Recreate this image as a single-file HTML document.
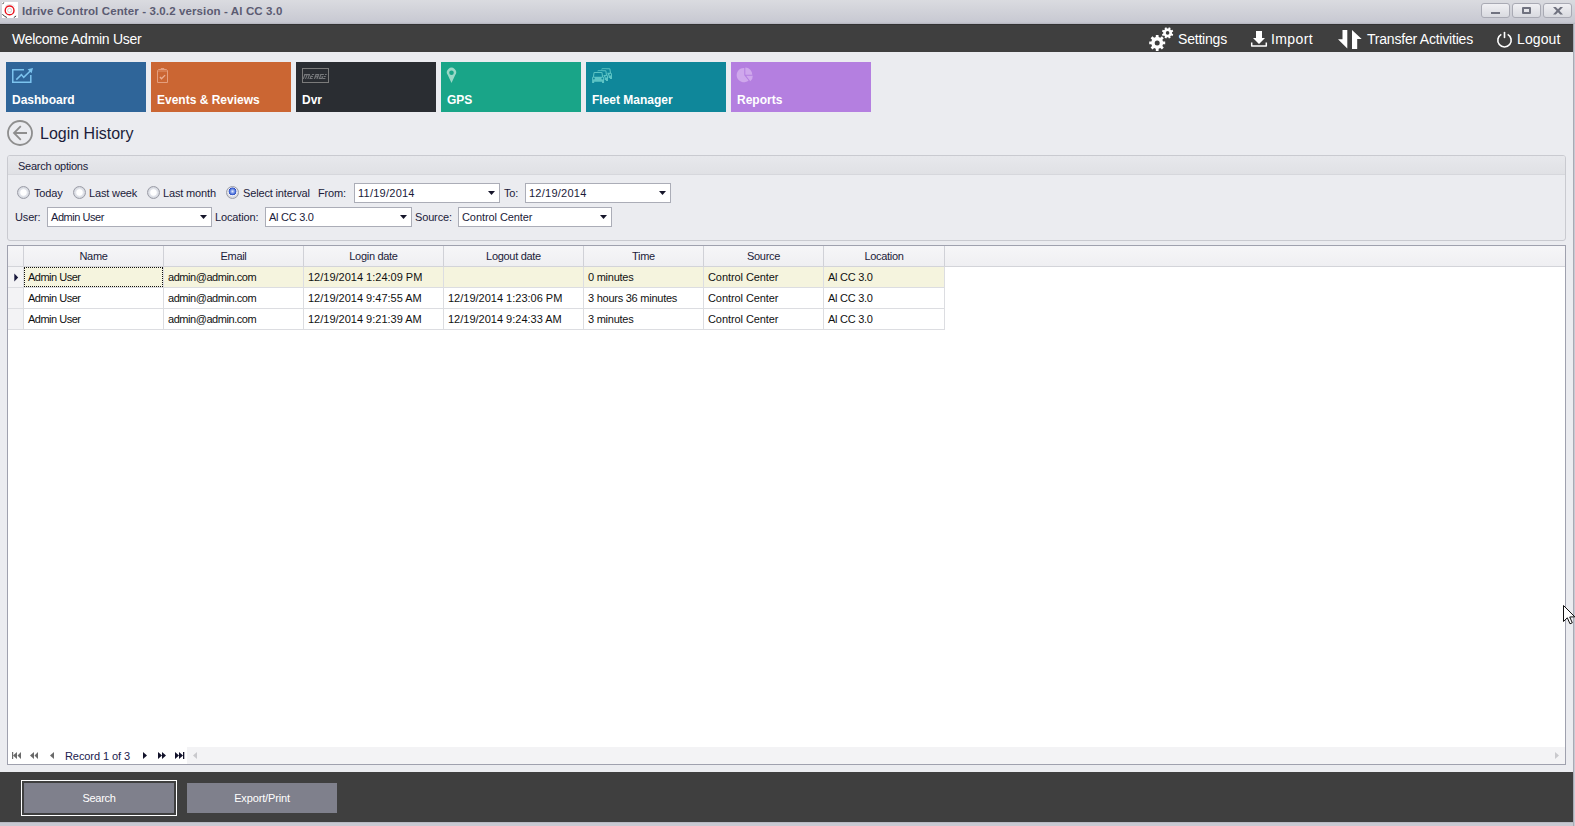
<!DOCTYPE html>
<html><head><meta charset="utf-8">
<style>
*{margin:0;padding:0;box-sizing:border-box}
html,body{width:1575px;height:826px;overflow:hidden}
body{position:relative;background:#ebecf0;font-family:"Liberation Sans",sans-serif;font-size:11px;color:#1b1b3a}
.a{position:absolute}
.t{position:absolute;white-space:nowrap;line-height:13px}
#titlebar{left:0;top:0;width:1575px;height:24px;background:linear-gradient(#dadbe0,#c8c9d2 92%,#b3b4bd)}
#title{left:22px;top:4px;font-weight:bold;font-size:11.5px;line-height:14px;color:#5b5b72;letter-spacing:0.12px}
.wbtn{position:absolute;top:3px;width:29px;height:15px;border:1px solid #a9aab4;border-radius:3px;background:linear-gradient(#f0f0f3,#d9dae0)}
#topbar{left:0;top:24px;width:1573px;height:28px;background:#3f3f3f;border-top:1px solid #333}
.tb{position:absolute;top:6px;color:#fff;font-size:14px;line-height:16px;white-space:nowrap}
.tile{position:absolute;top:62px;width:140px;height:50px}
.tile .lbl{position:absolute;left:6px;top:31px;font-weight:bold;font-size:12px;line-height:14px;color:#fff;white-space:nowrap}
.tile svg{position:absolute;left:0;top:0}
#group{left:7px;top:155px;width:1559px;height:86px;border:1px solid #c9cad0;border-radius:3px;background:#ebecf0}
#grouphead{left:0;top:0;width:100%;height:19px;background:linear-gradient(#e7e8ec,#e0e1e5);border-radius:2px 2px 0 0;border-bottom:1px solid #d6d7dc}
.radio{position:absolute;width:13px;height:13px;border-radius:50%;border:1px solid #9b9da7;background:radial-gradient(circle at 50% 50%,#fff 0,#fff 2.8px,#e6e8ee 3.6px,#d3d6dd 5.5px)}
.combo{position:absolute;height:20px;background:#fff;border:1px solid #abadb7}
.combo .v{position:absolute;left:3px;top:3px;line-height:13px;white-space:nowrap;letter-spacing:-0.1px}
.combo .arr{position:absolute;right:4px;top:7px;width:7px;height:4px;background:#15152a;clip-path:polygon(0 0,100% 0,50% 100%)}
#grid{left:7px;top:245px;width:1559px;height:520px;border:1px solid #9fa1ae;background:#fff}
#ghead{left:0;top:0;width:1557px;height:21px;background:linear-gradient(#f6f6f8,#efeff2);border-bottom:1px solid #d3d4d9}
.hc{position:absolute;top:0;height:20px;border-right:1px solid #d0d1d7;text-align:center;line-height:20px;color:#1b1b3a;letter-spacing:-0.3px}
.row{position:absolute;left:0;width:937px;height:21px;border-bottom:1px solid #dcdde1}
.c{position:absolute;top:0;height:20px;border-right:1px solid #dcdde1;padding-left:4px;line-height:20px;white-space:nowrap;color:#111;letter-spacing:-0.3px}
#footer{left:0;top:772px;width:1573px;height:50px;background:#3f3f3f}
.btn{position:absolute;top:11px;width:150px;height:30px;background:#7f808c;color:#fff;text-align:center;line-height:30px;font-size:11px}
.lab{letter-spacing:-0.15px;color:#1b1b3a}
.radio.sel{background:radial-gradient(circle at 50% 40%,#e6ecfc 0,#8aa6ec 1.6px,#3a5fd0 3.2px,#2a48b8 3.6px,#f3f4f7 4.2px,#d8dae0 5.5px)}
.selrow{background:#f5f4de}
.ind{background:#f3f3f5}
</style></head><body>
<div id="titlebar" class="a">
  <svg class="a" style="left:2px;top:2px" width="16" height="16" viewBox="0 0 16 16">
<rect x="0" y="0" width="16" height="16" fill="#fff"/>
<circle cx="7.6" cy="8.4" r="4.4" fill="none" stroke="#e8121c" stroke-width="1.4"/>
<circle cx="7.6" cy="8.4" r="2" fill="none" stroke="#c8c8c8" stroke-width="0.8"/>
<path d="M0.3,2.2 A9,9 0 0 1 2.2,0.4" stroke="#3a3a3a" stroke-width="1" fill="none"/>
<path d="M0.4,12.1 A9,9 0 0 0 4.9,15.5" stroke="#3a3a3a" stroke-width="1" fill="none"/>
<path d="M11.8,15.5 A9,9 0 0 0 14.1,13.9" stroke="#3a3a3a" stroke-width="1" fill="none"/>
<path d="M3.2,4.3 A6.5,6.5 0 0 1 12.8,4.8" stroke="#ddd" stroke-width="0.8" fill="none"/>
</svg>
  <div id="title" class="t">Idrive Control Center - 3.0.2 version - Al CC 3.0</div>
  <div class="wbtn" style="left:1481px"><div class="a" style="left:9px;top:8px;width:9px;height:2px;background:#70727f"></div></div>
  <div class="wbtn" style="left:1512px"><div class="a" style="left:9px;top:3px;width:9px;height:7px;border:2px solid #70727f;border-radius:1px"></div></div>
  <div class="wbtn" style="left:1543px"><svg class="a" style="left:9px;top:3px" width="10" height="8" viewBox="0 0 10 8"><path d="M0,0 L2.8,0 L5,2.3 L7.2,0 L10,0 L6.5,3.8 L10,7.5 L7.2,7.5 L5,5.3 L2.8,7.5 L0,7.5 L3.5,3.8Z" fill="#70727f"/></svg></div>
</div>
<div id="topbar" class="a">
  <div class="tb" style="left:12px;letter-spacing:-0.27px">Welcome Admin User</div>
  <svg class="a" style="left:1149px;top:2px" width="25" height="25" viewBox="0 0 25 25"><path fill="#fff" fill-rule="evenodd" d="M6.75,10.08 L6.87,7.91 L9.53,7.91 L9.65,10.08 L11.29,10.76 L12.91,9.31 L14.79,11.19 L13.34,12.81 L14.02,14.45 L16.19,14.57 L16.19,17.23 L14.02,17.35 L13.34,18.99 L14.79,20.61 L12.91,22.49 L11.29,21.04 L9.65,21.72 L9.53,23.89 L6.87,23.89 L6.75,21.72 L5.11,21.04 L3.49,22.49 L1.61,20.61 L3.06,18.99 L2.38,17.35 L0.21,17.23 L0.21,14.57 L2.38,14.45 L3.06,12.81 L1.61,11.19 L3.49,9.31 L5.11,10.76ZM10.70,15.90 A2.5,2.5 0 1 0 5.70,15.90 A2.5,2.5 0 1 0 10.70,15.90ZM19.25,1.55 L19.91,0.25 L21.67,0.98 L21.21,2.36 L22.14,3.29 L23.52,2.83 L24.25,4.59 L22.95,5.25 L22.95,6.55 L24.25,7.21 L23.52,8.97 L22.14,8.51 L21.21,9.44 L21.67,10.82 L19.91,11.55 L19.25,10.25 L17.95,10.25 L17.29,11.55 L15.53,10.82 L15.99,9.44 L15.06,8.51 L13.68,8.97 L12.95,7.21 L14.25,6.55 L14.25,5.25 L12.95,4.59 L13.68,2.83 L15.06,3.29 L15.99,2.36 L15.53,0.98 L17.29,0.25 L17.95,1.55ZM20.40,5.90 A1.8,1.8 0 1 0 16.80,5.90 A1.8,1.8 0 1 0 20.40,5.90Z"/></svg>
  <svg class="a" style="left:1250px;top:5px" width="18" height="17" viewBox="0 0 18 17"><path fill="#fff" d="M6,1 L12,1 L12,8 L15,8 L9,14 L3,8 L6,8Z"/><path d="M1.7,12.5 L1.7,16 L16.3,16 L16.3,12.5" fill="none" stroke="#fff" stroke-width="1.5" stroke-linejoin="round"/></svg>
  <svg class="a" style="left:1337px;top:3.5px" width="26" height="21" viewBox="0 0 26 21"><path fill="#fff" d="M5.5,1 L10.3,1 L10.3,19.5 L1,10.2 L5.5,10.2Z M15,1 L24.7,10 L20.2,10 L20.2,20 L15,20Z"/></svg>
  <svg class="a" style="left:1496px;top:6px" width="17" height="17" viewBox="0 0 17 17"><path d="M5.3,3.4 A6.7,6.7 0 1 0 11.7,3.4" fill="none" stroke="#fff" stroke-width="1.6"/><path d="M8.5,1.5 L8.5,6.5" stroke="#fff" stroke-width="1.6" stroke-linecap="round"/></svg>
  <div class="tb" style="left:1178px;letter-spacing:-0.2px">Settings</div>
  <div class="tb" style="left:1271px;letter-spacing:0.4px">Import</div>
  <div class="tb" style="left:1367px;letter-spacing:-0.21px">Transfer Activities</div>
  <div class="tb" style="left:1517px;letter-spacing:0.1px">Logout</div>
</div>

<div class="tile" style="left:6px;background:#2f6599"><svg width="40" height="28" viewBox="0 0 40 28"><path d="M18,7.75 L6.75,7.75 L6.75,20.25 L24.8,20.25 L24.8,13" fill="none" stroke="#7cc3ee" stroke-width="1.5"/><path d="M10.3,17.6 L15.4,12.6 L17.7,15.4 L24.5,8.8" fill="none" stroke="#7cc3ee" stroke-width="1.5"/><path d="M27,5.9 L21.6,7.3 L25.6,11.3Z" fill="#7cc3ee"/></svg><div class="lbl">Dashboard</div></div>
<div class="tile" style="left:151px;background:#cb6633"><svg width="40" height="28" viewBox="0 0 40 28"><path d="M6.5,20.5 L6.5,8.5 L7.5,7.5 L15.5,7.5 L16.5,8.5 L16.5,20.5Z" fill="none" stroke="#e59f7e" stroke-width="1"/><path d="M7,9 L16,9" stroke="#e2936d" stroke-width="1"/><rect x="9.8" y="6" width="3.4" height="1.5" fill="#e59f7e"/><path d="M8.9,15 L10.5,16.8 L14.1,13.1" fill="none" stroke="#ebaf93" stroke-width="1.3"/></svg><div class="lbl">Events &amp; Reviews</div></div>
<div class="tile" style="left:296px;background:#2a2d32"><svg width="40" height="28" viewBox="0 0 40 28"><rect x="6.5" y="6.5" width="26" height="14" fill="none" stroke="#7b7b7b" stroke-width="1"/><g fill="#77797c" transform="translate(5.3,0) skewX(-20)"><rect x="7.6" y="12" width="5.6" height="1.2"/><rect x="7.6" y="12" width="1.1" height="5"/><rect x="9.9" y="12.6" width="1.0" height="4.4"/><rect x="12.2" y="12" width="1.1" height="5"/><rect x="15.2" y="12" width="2.2" height="1.1"/><rect x="14.6" y="14.1" width="2.4" height="1.0"/><rect x="14.3" y="16" width="3.0" height="1"/><rect x="14.4" y="13.6" width="1.0" height="3.2"/><rect x="18.8" y="12" width="3.6" height="1.2"/><rect x="21.3" y="12" width="1.1" height="3"/><rect x="18.8" y="14.2" width="3.6" height="1.0"/><rect x="18.8" y="12" width="1.1" height="5"/><rect x="21.3" y="15" width="1.1" height="2"/><rect x="23.6" y="12" width="3.6" height="1.1"/><rect x="23.6" y="12" width="1.1" height="5"/><rect x="23.6" y="16" width="3.6" height="1"/><rect x="26.1" y="14.5" width="1.1" height="2.5"/><rect x="25.4" y="14.4" width="1.8" height="0.9"/><rect x="28.2" y="12" width="1.8" height="1.1"/><rect x="27.8" y="14.1" width="2.0" height="1"/><rect x="27.5" y="16" width="2.6" height="1"/></g></svg><div class="lbl">Dvr</div></div>
<div class="tile" style="left:441px;background:#19a588"><svg width="40" height="28" viewBox="0 0 40 28"><path fill="#9ad8c7" fill-rule="evenodd" d="M10.5,21 L6.9,13.2 A4.6,4.6 0 1 1 14.1,13.2Z M10.5,8.4 A2.3,2.3 0 1 0 10.5,13 A2.3,2.3 0 1 0 10.5,8.4Z"/></svg><div class="lbl">GPS</div></div>
<div class="tile" style="left:586px;background:#0f879a"><svg width="40" height="28" viewBox="0 0 40 28"><g transform="translate(7.9,-3.85)"><path d="M6.9,14.7 L7.5,10.8 Q7.7,10 8.6,10 L15.4,10 Q16.3,10 16.5,10.8 L17.1,14.7 L17.6,15 Q18.1,15.4 18.1,16 L18.1,20.9 L16,20.9 L16,19.8 L8.2,19.8 L8.2,20.9 L6.1,20.9 L6.1,16 Q6.1,15.4 6.5,15Z" fill="#5cc3c4" stroke="#0f879a" stroke-width="1.3" paint-order="stroke fill"/><path d="M8.5,11.1 L15.5,11.1 L16,14.7 L8,14.7Z M8.8,16.5 A0.9,0.9 0 1 0 7,16.5 A0.9,0.9 0 1 0 8.8,16.5Z M17.2,16.5 A0.9,0.9 0 1 0 15.4,16.5 A0.9,0.9 0 1 0 17.2,16.5Z" fill="#0f879a"/></g><g transform="translate(3.9,-1.8)"><path d="M6.9,14.7 L7.5,10.8 Q7.7,10 8.6,10 L15.4,10 Q16.3,10 16.5,10.8 L17.1,14.7 L17.6,15 Q18.1,15.4 18.1,16 L18.1,20.9 L16,20.9 L16,19.8 L8.2,19.8 L8.2,20.9 L6.1,20.9 L6.1,16 Q6.1,15.4 6.5,15Z" fill="#5cc3c4" stroke="#0f879a" stroke-width="1.3" paint-order="stroke fill"/><path d="M8.5,11.1 L15.5,11.1 L16,14.7 L8,14.7Z M8.8,16.5 A0.9,0.9 0 1 0 7,16.5 A0.9,0.9 0 1 0 8.8,16.5Z M17.2,16.5 A0.9,0.9 0 1 0 15.4,16.5 A0.9,0.9 0 1 0 17.2,16.5Z" fill="#0f879a"/></g><g><path d="M6.9,14.7 L7.5,10.8 Q7.7,10 8.6,10 L15.4,10 Q16.3,10 16.5,10.8 L17.1,14.7 L17.6,15 Q18.1,15.4 18.1,16 L18.1,20.9 L16,20.9 L16,19.8 L8.2,19.8 L8.2,20.9 L6.1,20.9 L6.1,16 Q6.1,15.4 6.5,15Z" fill="#5cc3c4" stroke="#0f879a" stroke-width="1.3" paint-order="stroke fill"/><path d="M8.5,11.1 L15.5,11.1 L16,14.7 L8,14.7Z M8.8,16.5 A0.9,0.9 0 1 0 7,16.5 A0.9,0.9 0 1 0 8.8,16.5Z M17.2,16.5 A0.9,0.9 0 1 0 15.4,16.5 A0.9,0.9 0 1 0 17.2,16.5Z" fill="#0f879a"/></g></svg><div class="lbl">Fleet Manager</div></div>
<div class="tile" style="left:731px;background:#b47fe0"><svg width="40" height="28" viewBox="0 0 40 28"><g fill="#cfa8ec" transform="translate(0.3,-0.3)"><path d="M13,6.2 L13,13.5 L17.3,18.8 A7.2,7.2 0 1 1 13,6.2Z"/><path d="M14,5.8 A7.2,7.2 0 0 1 21,13 L14,13Z"/><path d="M21.5,14 A7.2,7.2 0 0 1 19,19.6 L14.8,14Z"/></g></svg><div class="lbl">Reports</div></div>

<svg class="a" style="left:4px;top:117px" width="32" height="32" viewBox="0 0 32 32"><circle cx="16" cy="16" r="12" fill="none" stroke="#8e8e8e" stroke-width="1.8"/><path d="M9.5,16 L23,16 M16.8,9.2 L10,16 L16.8,22.8" fill="none" stroke="#8e8e8e" stroke-width="1.8"/></svg>
<div class="t" style="left:40px;top:125px;font-size:16px;line-height:18px;color:#1c1c3a">Login History</div>

<div id="group" class="a">
  <div id="grouphead" class="a"></div>
  <div class="t" style="left:10px;top:4px;letter-spacing:-0.25px">Search options</div>
</div>


<!-- search options -->
<div class="radio" style="left:17px;top:186px"></div>
<div class="t lab" style="left:34px;top:187px">Today</div>
<div class="radio" style="left:73px;top:186px"></div>
<div class="t lab" style="left:89px;top:187px">Last week</div>
<div class="radio" style="left:147px;top:186px"></div>
<div class="t lab" style="left:163px;top:187px">Last month</div>
<div class="radio sel" style="left:226px;top:186px"></div>
<div class="t lab" style="left:243px;top:187px">Select interval</div>
<div class="t lab" style="left:318px;top:187px">From:</div>
<div class="combo" style="left:354px;top:183px;width:146px"><div class="v" style="letter-spacing:0.25px">11/19/2014</div><div class="arr"></div></div>
<div class="t lab" style="left:504px;top:187px">To:</div>
<div class="combo" style="left:525px;top:183px;width:146px"><div class="v" style="letter-spacing:0.25px">12/19/2014</div><div class="arr"></div></div>
<div class="t lab" style="left:15px;top:211px">User:</div>
<div class="combo" style="left:47px;top:207px;width:165px"><div class="v" style="letter-spacing:-0.45px">Admin User</div><div class="arr"></div></div>
<div class="t lab" style="left:215px;top:211px">Location:</div>
<div class="combo" style="left:265px;top:207px;width:147px"><div class="v" style="letter-spacing:-0.26px">Al CC 3.0</div><div class="arr"></div></div>
<div class="t lab" style="left:415px;top:211px">Source:</div>
<div class="combo" style="left:458px;top:207px;width:154px"><div class="v" style="letter-spacing:-0.08px">Control Center</div><div class="arr"></div></div>

<div id="grid" class="a">
<div class="row selrow" style="top:21px">
  <div class="c ind" style="left:0;width:16px"><svg class="a" style="left:6px;top:6px" width="6" height="9" viewBox="0 0 6 9"><path d="M0.3,0.6 L4.2,4.5 L0.3,8.4Z" fill="#17173a"/></svg></div>
  <div class="c" style="left:16px;width:140px;letter-spacing:-0.5px">Admin User<div class="a" style="left:0;top:0;width:139px;height:20px;border:1px dotted #111"></div></div>
  <div class="c" style="left:156px;width:140px;letter-spacing:-0.45px">admin@admin.com</div>
  <div class="c" style="left:296px;width:140px;letter-spacing:0px">12/19/2014 1:24:09 PM</div>
  <div class="c" style="left:436px;width:140px;letter-spacing:0px"></div>
  <div class="c" style="left:576px;width:120px;letter-spacing:-0.25px">0 minutes</div>
  <div class="c" style="left:696px;width:120px;letter-spacing:-0.08px">Control Center</div>
  <div class="c" style="left:816px;width:121px;letter-spacing:-0.26px">Al CC 3.0</div>
</div>
<div class="row" style="top:42px">
  <div class="c ind" style="left:0;width:16px"></div>
  <div class="c" style="left:16px;width:140px;letter-spacing:-0.5px">Admin User</div>
  <div class="c" style="left:156px;width:140px;letter-spacing:-0.45px">admin@admin.com</div>
  <div class="c" style="left:296px;width:140px;letter-spacing:0px">12/19/2014 9:47:55 AM</div>
  <div class="c" style="left:436px;width:140px;letter-spacing:0px">12/19/2014 1:23:06 PM</div>
  <div class="c" style="left:576px;width:120px;letter-spacing:-0.25px">3 hours 36 minutes</div>
  <div class="c" style="left:696px;width:120px;letter-spacing:-0.08px">Control Center</div>
  <div class="c" style="left:816px;width:121px;letter-spacing:-0.26px">Al CC 3.0</div>
</div>
<div class="row" style="top:63px">
  <div class="c ind" style="left:0;width:16px"></div>
  <div class="c" style="left:16px;width:140px;letter-spacing:-0.5px">Admin User</div>
  <div class="c" style="left:156px;width:140px;letter-spacing:-0.45px">admin@admin.com</div>
  <div class="c" style="left:296px;width:140px;letter-spacing:0px">12/19/2014 9:21:39 AM</div>
  <div class="c" style="left:436px;width:140px;letter-spacing:0px">12/19/2014 9:24:33 AM</div>
  <div class="c" style="left:576px;width:120px;letter-spacing:-0.25px">3 minutes</div>
  <div class="c" style="left:696px;width:120px;letter-spacing:-0.08px">Control Center</div>
  <div class="c" style="left:816px;width:121px;letter-spacing:-0.26px">Al CC 3.0</div>
</div>

<div id="nav" class="a" style="left:0;top:501px;width:1557px;height:17px">
  <div class="a" style="left:179px;top:0;width:1378px;height:17px;background:#f3f3f5"></div>
  <div class="t" style="left:57px;top:3px;color:#20204e;letter-spacing:-0.08px">Record 1 of 3</div>
<svg class="a" style="left:0;top:0" width="180" height="18" viewBox="0 0 180 18"><g fill="#6a6a6a"><rect x="4" y="5" width="1.2" height="7"/><path d="M5,8.5 L9,5 L9,12Z M9.5,8.5 L13,5 L13,12Z"/><path d="M22,8.5 L26,5 L26,12Z M26.5,8.5 L30,5 L30,12Z"/><path d="M42,8.5 L46,5 L46,12Z"/></g><g fill="#12122a"><path d="M135,5 L139,8.5 L135,12Z"/><path d="M150,5 L154,8.5 L150,12Z M154,5 L158,8.5 L154,12Z"/><path d="M167,5 L171,8.5 L167,12Z M171,5 L175,8.5 L171,12Z"/><rect x="175" y="5" width="1.3" height="7"/></g></svg>
  <svg class="a" style="left:185px;top:0" width="6" height="18" viewBox="0 0 6 18"><path d="M0,8.5 L4,5 L4,12Z" fill="#c9c9cd"/></svg>
  <svg class="a" style="left:1547px;top:0" width="6" height="18" viewBox="0 0 6 18"><path d="M4,8.5 L0,5 L0,12Z" fill="#c9c9cd"/></svg>

</div>
  <div id="ghead" class="a">
    <div class="hc" style="left:0;width:16px"></div>
    <div class="hc" style="left:16px;width:140px">Name</div>
    <div class="hc" style="left:156px;width:140px">Email</div>
    <div class="hc" style="left:296px;width:140px">Login date</div>
    <div class="hc" style="left:436px;width:140px">Logout date</div>
    <div class="hc" style="left:576px;width:120px">Time</div>
    <div class="hc" style="left:696px;width:120px">Source</div>
    <div class="hc" style="left:816px;width:121px">Location</div>
  </div>
</div>

<div id="footer" class="a">
  <div class="a" style="left:21px;top:8px;width:156px;height:36px;border:1px solid #fff"></div>
  <div class="btn" style="left:24px;letter-spacing:-0.3px">Search</div>
  <div class="btn" style="left:187px;letter-spacing:-0.15px">Export/Print</div>
</div>
<div class="a" style="left:1573px;top:24px;width:2px;height:802px;background:#c8c9d2;border-left:1px solid #a8aab4"></div>
<div class="a" style="left:0;top:822px;width:1573px;height:4px;background:#c8c9d2;border-top:1px solid #b8bac3"></div>
<svg class="a" style="left:1563px;top:605px" width="12" height="20" viewBox="0 0 12 20"><path d="M0.5,0.5 L0.5,16.5 L4.3,12.8 L7,18.8 L9.3,17.8 L6.7,12 L11.8,11.8Z" fill="#fff" stroke="#111" stroke-width="1" stroke-linejoin="miter"/></svg>
</body></html>
